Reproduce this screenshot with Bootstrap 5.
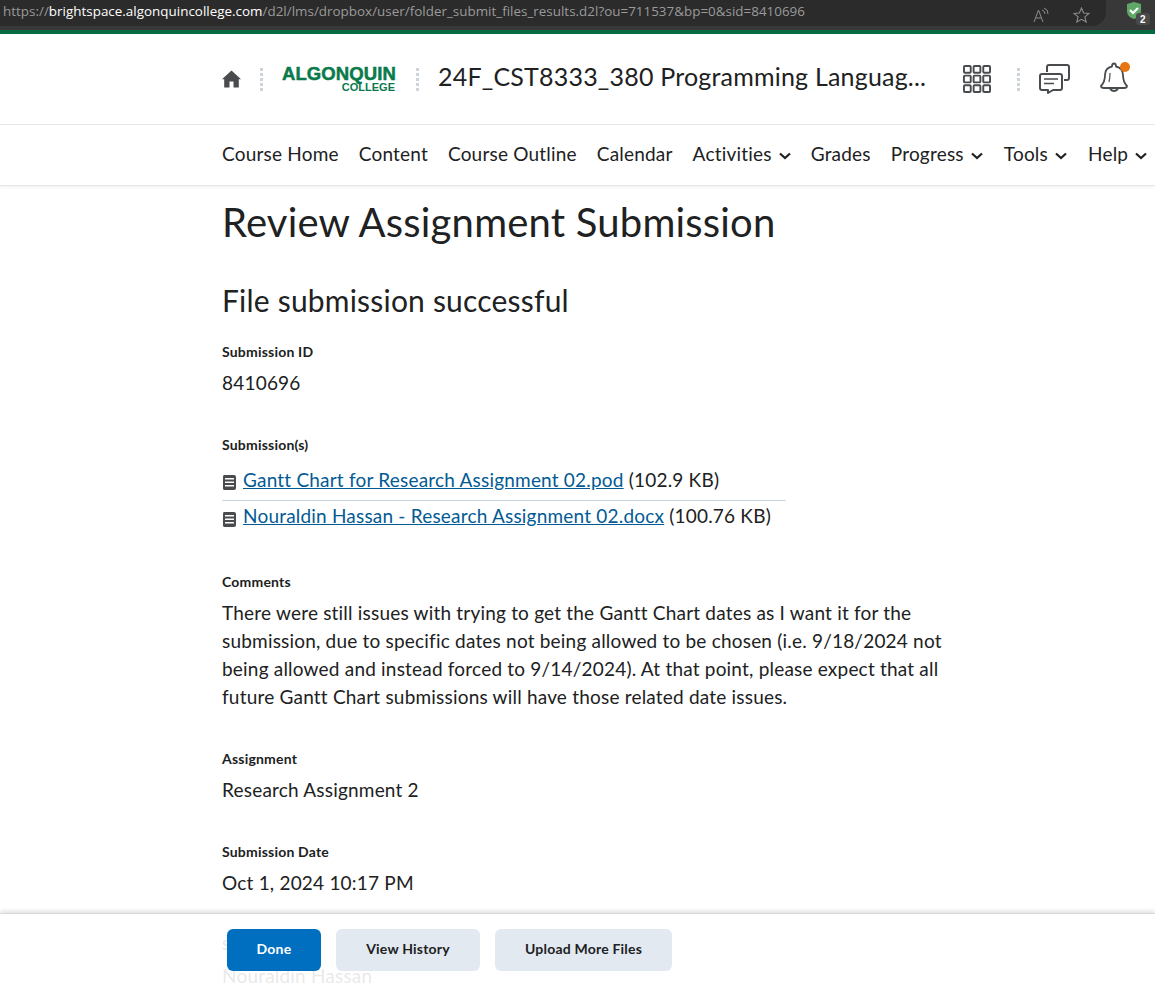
<!DOCTYPE html>
<html>

<head>
  <link href="https://cdn.jsdelivr.net/npm/bootstrap@5.3.2/dist/css/bootstrap.min.css" rel="stylesheet"
    type="text/css" />
  <script src="https://cdn.jsdelivr.net/npm/bootstrap@5.3.2/dist/js/bootstrap.bundle.min.js">
  </script>
  <style>
    html, body { height: 984px; overflow: hidden; }
    body { font-family: Lato, "Liberation Sans", sans-serif; font-size: 19px; line-height: 28px; letter-spacing: .2px; color: #202122; background: #fff; }

    .browser-bar { height: 30px; background: #383838; }
    .url-pill { width: 1106px; height: 26px; background: #2b2b2b; border-radius: 0 0 14px 0; padding-left: 3px; font-family: "Open Sans", "Liberation Sans", sans-serif; font-size: 13.4px; line-height: 22px; color: #9a9a9a; letter-spacing: .02px; white-space: nowrap; }
    .url-host { color: #fff; }
    .browser-icons { width: 1106px; padding-right: 16px; gap: 23px; }
    .shield-box { width: 49px; padding-top: 2px; }
    .green-strip { height: 4px; background: #066b41; }

    .head-row { height: 91px; padding: 0 0 1px 222px; border-bottom: 1px solid #e3e6ea; }
    .dots { width: 3px; height: 24px; margin: 0 19px; background-image: radial-gradient(circle, #cdd5dc 1.5px, transparent 1.6px); background-size: 3px 5px; }
    .logo-box { width: 113px; margin-right: 2px; color: #0a7a4b; font-family: "Liberation Sans", sans-serif; font-weight: 700; text-align: right; letter-spacing: 0; }
    .logo-top { font-size: 18.5px; line-height: 17px; letter-spacing: .1px; -webkit-text-stroke: .5px #0a7a4b; }
    .logo-sub { font-size: 11px; line-height: 10px; }
    .course-title { font-size: 25px; line-height: 32px; padding-bottom: 5px; white-space: nowrap; width: 489px; }
    .right-icons { margin-left: 36px; }
    .right-icons .dots { margin: 0 19px 0 26px; }
    .bell-icon { margin-left: 27px; }

    .nav-row { height: 61px; padding: 0 0 2px 222px; gap: 20px; border-bottom: 1px solid #e6e6e6; box-shadow: 0 2px 2px #f6f6f6; white-space: nowrap; }
    .nav-row a { color: #202122; text-decoration: none; }
    .nav-row a:nth-last-child(-n+2) { margin-left: 1px; }
    .nav-chevron { margin-left: 2px; }

    .page-body { padding-left: 222px; width: 945px; }
    .page-title { font-size: 40px; line-height: 48px; font-weight: 400; margin: 12px 0 0; }
    .sub-title { font-size: 30px; line-height: 36px; font-weight: 400; margin: 36px 0 24px; }
    .field-label { font-size: 14px; line-height: 20px; font-weight: 700; }
    .field { margin-bottom: 38px; }
    .field-value { margin-top: 7px; }
    .files { width: 564px; margin-top: 7px; }
    .file-row { height: 38px; line-height: 36px; gap: 6px; }
    .file-row svg { margin-top: 13px; flex: none; }
    .file-row + .file-row { height: 34px; line-height: 30px; border-top: 1px solid #cdd5dc; }
    .file-row + .file-row svg { margin-top: 11px; }
    .file-row a { color: #035a94; }

    .action-bar { position: fixed; left: 0; right: 0; bottom: 0; height: 71px; background: rgba(255,255,255,.9); border-top: 1px solid #d8d8d8; box-shadow: 0 -2px 4px rgba(0,0,0,.12); padding: 15px 0 0 227px; gap: 15px; }
    .act-btn { height: 42px; border: 0; border-radius: 6px; background: #e3e9f1; color: #202122; font-size: 14px; font-weight: 700; letter-spacing: .2px; padding: 0 0 2px; }
    .act-done { width: 94px; background: #006fbf; color: #fff; }
    .act-history { width: 144px; }
    .act-upload { width: 177px; }
  </style>
</head>

<body>
  <header>
    <div class="browser-bar d-flex position-relative">
      <div class="url-pill">https://<span class="url-host">brightspace.algonquincollege.com</span>/d2l/lms/dropbox/user/folder_submit_files_results.d2l?ou=711537&amp;bp=0&amp;sid=8410696</div>
      <div class="shield-box d-flex justify-content-end align-items-start">
        <svg width="30" height="26" viewBox="1 0 30 26">
          <path d="M3 2 L10 0 L17 2 V9 Q17 15 10 17 Q3 15 3 9Z" fill="#5fa868" />
          <path d="M6 8 l3 3 l5 -5" fill="none" stroke="#fff" stroke-width="2" />
          <rect x="12" y="11" width="14" height="12" rx="3" fill="#4a4a4a" />
          <text x="19" y="21" font-size="10" font-weight="700" fill="#fff" text-anchor="middle" font-family="Liberation Sans">2</text>
        </svg>
      </div>
      <div class="browser-icons position-absolute top-0 start-0 d-flex justify-content-end align-items-center h-100">
        <svg width="17" height="16" viewBox="0 0 17 16" fill="none" stroke="#8c8c8c" stroke-width="1">
          <path d="M1 15 L5.500 3 L10 15 M3 11 H8" />
          <path d="M9 3 Q12 4 12 7 M11 1 Q15 2 15 7" />
        </svg>
        <svg width="17" height="16" viewBox="0 0 17 16" fill="none" stroke="#8c8c8c" stroke-width="1.100">
          <path d="M8.500 1 L10.600 6 L16 6.400 L11.900 9.900 L13.200 15 L8.500 12.300 L3.800 15 L5.100 9.900 L1 6.400 L6.400 6Z" />
        </svg>
      </div>
    </div>
    <div class="green-strip"></div>

    <div class="head-row d-flex align-items-center">
      <svg width="19" height="18" viewBox="0 0 19 18" fill="#494c4e">
        <path d="M9.500 0.500 L19 9.300 L16.800 9.300 V17.500 H11.500 V11.500 H7.500 V17.500 H2.200 V9.300 H0 Z" />
      </svg>
      <span class="dots"></span>
      <div class="logo-box">
        <div class="logo-top">ALGONQUIN</div>
        <div class="logo-sub">COLLEGE</div>
      </div>
      <span class="dots"></span>
      <div class="course-title">24F_CST8333_380 Programming Languag...</div>
      <div class="right-icons d-flex align-items-center">
        <svg width="28" height="28" viewBox="0 0 29 29" fill="none" stroke="#494c4e" stroke-width="2">
          <rect x="1" y="1" width="7" height="7" rx="1" /><rect x="11" y="1" width="7" height="7" rx="1" /><rect x="21" y="1" width="7" height="7" rx="1" />
          <rect x="1" y="11" width="7" height="7" rx="1" /><rect x="11" y="11" width="7" height="7" rx="1" /><rect x="21" y="11" width="7" height="7" rx="1" />
          <rect x="1" y="21" width="7" height="7" rx="1" /><rect x="11" y="21" width="7" height="7" rx="1" /><rect x="21" y="21" width="7" height="7" rx="1" />
        </svg>
        <span class="dots"></span>
        <svg width="31" height="30" viewBox="0 0 31 30" fill="none" stroke="#494c4e" stroke-width="2" stroke-linejoin="round">
          <path d="M8 8 V3 Q8 1 10 1 H28 Q30 1 30 3 V14 Q30 16 28 16 H25" />
          <path d="M3 10 H21 Q23 10 23 12 V24 Q23 26 21 26 H14 L9 29 V26 H3 Q1 26 1 24 V12 Q1 10 3 10Z" fill="#fff" />
          <path d="M5 15 H19 M5 19.500 H15" stroke-width="1.500" />
        </svg>
        <svg class="bell-icon" width="34" height="34" viewBox="0 2 34 34" fill="none" stroke="#494c4e" stroke-width="1.800" stroke-linejoin="round">
          <path d="M4 26 Q8 22 8 15 Q8 8 15 6.500 Q15 3.500 17 3.500 Q19 3.500 19 6.500 Q26 8 26 15 Q26 22 30 26 Q30 28 27 28 H7 Q4 28 4 26Z" />
          <path d="M13 29 Q17 33 21 29" />
          <path d="M12 22 Q13 18 13 13" stroke-width="1.200" />
          <circle cx="28" cy="7" r="5" fill="#e87511" stroke="none" />
        </svg>
      </div>
    </div>

    <nav class="nav-row d-flex align-items-center">
      <a href="#">Course Home</a>
      <a href="#">Content</a>
      <a href="#">Course Outline</a>
      <a href="#">Calendar</a>
      <a href="#">Activities <svg class="nav-chevron" width="12" height="8" viewBox="0 0 12 8" fill="none" stroke="#202122" stroke-width="2.200"><path d="M1 1.500 L6 6 L11 1.500" /></svg></a>
      <a href="#">Grades</a>
      <a href="#">Progress <svg class="nav-chevron" width="12" height="8" viewBox="0 0 12 8" fill="none" stroke="#202122" stroke-width="2.200"><path d="M1 1.500 L6 6 L11 1.500" /></svg></a>
      <a href="#">Tools <svg class="nav-chevron" width="12" height="8" viewBox="0 0 12 8" fill="none" stroke="#202122" stroke-width="2.200"><path d="M1 1.500 L6 6 L11 1.500" /></svg></a>
      <a href="#">Help <svg class="nav-chevron" width="12" height="8" viewBox="0 0 12 8" fill="none" stroke="#202122" stroke-width="2.200"><path d="M1 1.500 L6 6 L11 1.500" /></svg></a>
    </nav>
  </header>

  <main class="page-body">
    <h1 class="page-title">Review Assignment Submission</h1>
    <h2 class="sub-title">File submission successful</h2>

    <div class="field">
      <div class="field-label">Submission ID</div>
      <div class="field-value">8410696</div>
    </div>

    <div class="field">
      <div class="field-label">Submission(s)</div>
      <div class="files">
        <div class="file-row d-flex align-items-start">
          <svg width="15" height="15" viewBox="0 0 15 15" fill="#494c4e"><path d="M2 0 H12 Q14 0 14 2 V13 Q14 15 12 15 H2 Q1 15 1 13 V2 Q1 0 2 0Z M3 3 V4.500 H12 V3Z M3 6.500 V8 H12 V6.500Z M3 10 V11.500 H12 V10Z" fill-rule="evenodd" /></svg>
          <span><a href="#">Gantt Chart for Research Assignment 02.pod</a> (102.9 KB)</span>
        </div>
        <div class="file-row d-flex align-items-start">
          <svg width="15" height="15" viewBox="0 0 15 15" fill="#494c4e"><path d="M2 0 H12 Q14 0 14 2 V13 Q14 15 12 15 H2 Q1 15 1 13 V2 Q1 0 2 0Z M3 3 V4.500 H12 V3Z M3 6.500 V8 H12 V6.500Z M3 10 V11.500 H12 V10Z" fill-rule="evenodd" /></svg>
          <span><a href="#">Nouraldin Hassan - Research Assignment 02.docx</a> (100.76 KB)</span>
        </div>
      </div>
    </div>

    <div class="field">
      <div class="field-label">Comments</div>
      <div class="field-value">There were still issues with trying to get the Gantt Chart dates as I want it for the submission, due to specific dates not being allowed to be chosen (i.e. 9/18/2024 not being allowed and instead forced to 9/14/2024). At that point, please expect that all future Gantt Chart submissions will have those related date issues.</div>
    </div>

    <div class="field">
      <div class="field-label">Assignment</div>
      <div class="field-value">Research Assignment 2</div>
    </div>

    <div class="field">
      <div class="field-label">Submission Date</div>
      <div class="field-value">Oct 1, 2024 10:17 PM</div>
    </div>

    <div class="field">
      <div class="field-label">Submitted By</div>
      <div class="field-value">Nouraldin Hassan</div>
    </div>
  </main>

  <div class="action-bar d-flex">
    <button class="act-btn act-done" type="button">Done</button>
    <button class="act-btn act-history" type="button">View History</button>
    <button class="act-btn act-upload" type="button">Upload More Files</button>
  </div>
</body>

</html>
